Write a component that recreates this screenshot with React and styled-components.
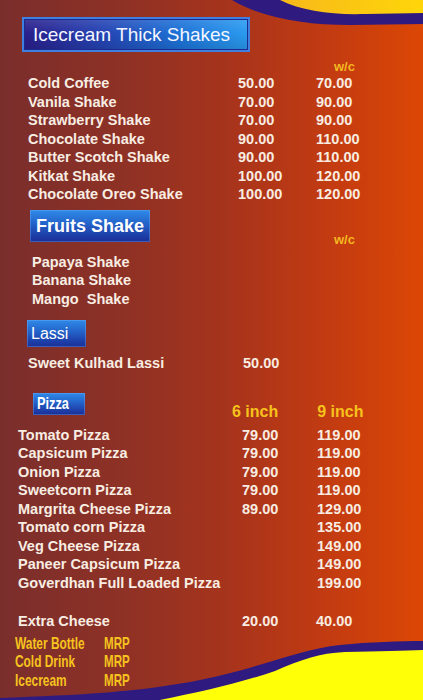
import React from "react";
import styled, { createGlobalStyle } from "styled-components";

const Global = createGlobalStyle`
  html, body { margin: 0; padding: 0; background: #7b2f2b; }
  #root { width: 423px; height: 700px; }
`;

const Page = styled.div`
  position: relative;
  width: 423px;
  height: 700px;
  overflow: hidden;
  background: linear-gradient(90deg, #7a2e2c 0%, #8f3125 30%, #a8341b 55%, #c53c10 80%, #dc4704 100%);
  font-family: "Liberation Sans", Arial, sans-serif;
  color: #f8ede2;
`;

const Decor = styled.svg`
  position: absolute;
  left: 0;
  top: 0;
  width: 423px;
  height: 700px;
  pointer-events: none;
`;

const Content = styled.div`
  position: relative;
  z-index: 1;
  display: flex;
  flex-direction: column;
`;

const TitleBanner = styled.div`
  box-sizing: border-box;
  margin: 17px 0 0 22px;
  width: 228px;
  height: 35px;
  display: flex;
  align-items: center;
  padding-left: 9px;
  font-size: 19px;
  color: #f4f6ff;
  border: 2px solid #3f7fe0;
  background:
    linear-gradient(180deg, rgba(255,255,255,0.12) 0%, rgba(255,255,255,0) 45%, rgba(0,0,0,0.12) 100%),
    linear-gradient(90deg, #2a1f8c 0%, #2544b4 35%, #1d73d8 70%, #2a9bf0 100%);
  box-shadow: inset 0 0 0 1px #1c2a90;
`;

const Tag = styled.div`
  box-sizing: border-box;
  margin-left: ${(p) => p.$left}px;
  width: ${(p) => p.$w}px;
  height: ${(p) => p.$h}px;
  display: flex;
  align-items: center;
  padding-left: ${(p) => p.$pad}px;
  font-size: ${(p) => p.$fs}px;
  font-weight: ${(p) => (p.$bold ? 700 : 400)};
  color: #ffffff;
  flex-shrink: 0;
  background: linear-gradient(180deg, #2f8ae8 0%, #2466cc 40%, #1d3ea8 80%, #1a2f95 100%);
  box-shadow: inset 0 0 0 1px rgba(120, 180, 255, 0.35);
`;

const Narrow = styled.span`
  display: inline-block;
  transform: scaleX(${(p) => p.$sx || 0.8});
  transform-origin: left center;
  white-space: pre;
`;

const Yellow = styled.div`
  font-weight: 700;
  font-size: ${(p) => p.$fs}px;
  line-height: ${(p) => p.$lh}px;
  color: ${(p) => p.$color || "#f6c21c"};
  margin-left: ${(p) => p.$left || 0}px;
  margin-bottom: ${(p) => p.$mb || 0}px;
`;

const HeadRow = styled.div`
  display: flex;
  align-items: flex-end;
  margin-top: ${(p) => p.$mt}px;
`;

const WcLine = styled.div`
  margin-top: ${(p) => p.$mt}px;
  padding-left: ${(p) => p.$left}px;
  font-weight: 700;
  font-size: 13px;
  line-height: 14px;
  color: #f2b820;
`;

const List = styled.div`
  display: grid;
  grid-template-columns: ${(p) => p.$cols};
  grid-auto-rows: 18.5px;
  align-items: center;
  margin-top: ${(p) => p.$mt}px;
  padding-left: ${(p) => p.$left}px;
  font-weight: 700;
  font-size: 14.5px;
  line-height: 18.5px;
  white-space: pre;
`;

const Cell = styled.div``;

const DrinkList = styled.div`
  display: grid;
  grid-template-columns: 89px auto;
  grid-auto-rows: 18.5px;
  align-items: center;
  margin-top: ${(p) => p.$mt}px;
  padding-left: 15px;
  font-weight: 700;
  font-size: 17px;
  line-height: 18.5px;
  color: #f6c31e;
`;

const shakes = [
  ["Cold Coffee", "50.00", "70.00"],
  ["Vanila Shake", "70.00", "90.00"],
  ["Strawberry Shake", "70.00", "90.00"],
  ["Chocolate Shake", "90.00", "110.00"],
  ["Butter Scotch Shake", "90.00", "110.00"],
  ["Kitkat Shake", "100.00", "120.00"],
  ["Chocolate Oreo Shake", "100.00", "120.00"],
];

const fruits = ["Papaya Shake", "Banana Shake", "Mango  Shake"];

const pizzas = [
  ["Tomato Pizza", "79.00", "119.00"],
  ["Capsicum Pizza", "79.00", "119.00"],
  ["Onion Pizza", "79.00", "119.00"],
  ["Sweetcorn Pizza", "79.00", "119.00"],
  ["Margrita Cheese Pizza", "89.00", "129.00"],
  ["Tomato corn Pizza", "", "135.00"],
  ["Veg Cheese Pizza", "", "149.00"],
  ["Paneer Capsicum Pizza", "", "149.00"],
  ["Goverdhan Full Loaded Pizza", "", "199.00"],
];

const drinks = ["Water Bottle", "Cold Drink", "Icecream"];

function Rows({ rows }) {
  return rows.map((r, i) => (
    <React.Fragment key={i}>
      {r.map((c, j) => (
        <Cell key={j}>{c}</Cell>
      ))}
    </React.Fragment>
  ));
}

export default function App() {
  return (
    <>
      <Global />
      <Page>
        <Decor viewBox="0 0 423 700">
          <defs>
            <linearGradient id="topY" x1="0" y1="0" x2="1" y2="0">
              <stop offset="0" stopColor="#f7b81a" />
              <stop offset="1" stopColor="#ffd60a" />
            </linearGradient>
          </defs>
          <path d="M232 0 C 262 18, 305 25, 350 25 L 423 24 L 423 0 Z" fill="#2f1a80" />
          <path d="M280 0 C 302 11, 332 15, 365 14 L 423 13 L 423 0 Z" fill="url(#topY)" />
          <path d="M0 698 C 80 695, 140 692, 200 680 C 260 668, 300 649, 340 645 C 370 642, 400 641, 423 641 L 423 700 L 0 700 Z" fill="#2f1a80" />
          <path d="M160 700 C 200 692, 240 683, 275 671 C 300 660, 320 653, 345 652 C 380 651, 405 651, 423 650 L 423 700 Z" fill="#ffff08" />
        </Decor>
        <Content>
          <TitleBanner>Icecream Thick Shakes</TitleBanner>
          <WcLine $mt={8} $left={334}>w/c</WcLine>
          <List $mt={0} $left={28} $cols="210px 78px auto">
            <Rows rows={shakes} />
          </List>

          <HeadRow $mt={6.5}>
            <Tag $left={30} $w={120} $h={32} $pad={6} $fs={18} $bold>
              Fruits Shake
            </Tag>
            <Yellow $fs={13} $lh={14} $left={184} $mb={-5} $color="#f2b820">
              w/c
            </Yellow>
          </HeadRow>
          <List $mt={10.75} $left={32} $cols="auto">
            {fruits.map((f) => (
              <Cell key={f}>{f}</Cell>
            ))}
          </List>

          <HeadRow $mt={11.75}>
            <Tag $left={27} $w={59} $h={27} $pad={4} $fs={16}>
              Lassi
            </Tag>
          </HeadRow>
          <List $mt={6.75} $left={28} $cols="215px auto">
            <Cell>Sweet Kulhad Lassi</Cell>
            <Cell>50.00</Cell>
          </List>

          <HeadRow $mt={20.75}>
            <Tag $left={33} $w={52} $h={22} $pad={4} $fs={17} $bold>
              <Narrow $sx={0.75}>Pizza</Narrow>
            </Tag>
            <Yellow $fs={16} $lh={18} $left={147} $mb={-6}>
              6 inch
            </Yellow>
            <Yellow $fs={16} $lh={18} $left={39} $mb={-6}>
              9 inch
            </Yellow>
          </HeadRow>
          <List $mt={10.75} $left={18} $cols="224px 75px auto">
            <Rows rows={pizzas} />
          </List>

          <List $mt={19.5} $left={18} $cols="224px 74px auto">
            <Cell>Extra Cheese</Cell>
            <Cell>20.00</Cell>
            <Cell>40.00</Cell>
          </List>

          <DrinkList $mt={4.5}>
            {drinks.map((d) => (
              <React.Fragment key={d}>
                <Cell>
                  <Narrow $sx={0.7}>{d}</Narrow>
                </Cell>
                <Cell>
                  <Narrow $sx={0.68}>MRP</Narrow>
                </Cell>
              </React.Fragment>
            ))}
          </DrinkList>
        </Content>
      </Page>
    </>
  );
}
